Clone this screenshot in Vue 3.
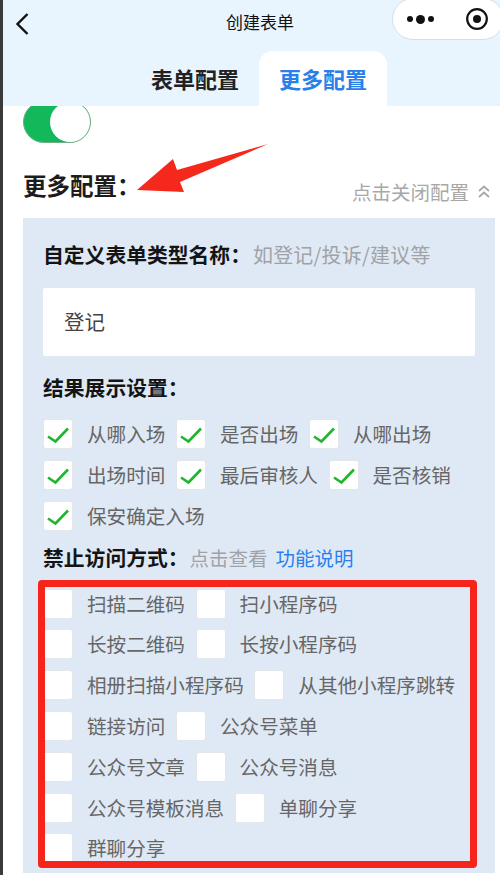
<script setup>
const resultOptions = ["从哪入场", "是否出场", "从哪出场", "出场时间", "最后审核人", "是否核销", "保安确定入场"];
const forbidOptions = [
  "扫描二维码", "扫小程序码", "长按二维码", "长按小程序码", "相册扫描小程序码", "从其他小程序跳转",
  "链接访问", "公众号菜单", "公众号文章", "公众号消息", "公众号模板消息", "单聊分享", "群聊分享",
];
</script>

<template>
  <div class="page">
    <header class="top">
      <div class="nav">
        <svg class="back" viewBox="0 0 14 24" width="14" height="24">
          <polyline points="12.5,2 2.5,12 12.5,22" fill="none" stroke="#111" stroke-width="2.4" />
        </svg>
        <div class="nav-title">创建表单</div>
        <div class="capsule">
          <span class="dots"><i></i><i class="big"></i><i></i></span>
          <svg viewBox="0 0 24 24" width="24" height="24">
            <circle cx="12" cy="12" r="9.8" fill="none" stroke="#111" stroke-width="2.2" />
            <circle cx="12" cy="12" r="4" fill="#111" />
          </svg>
        </div>
      </div>
      <div class="tabs">
        <div class="tab">表单配置</div>
        <div class="tab active">更多配置</div>
      </div>
    </header>

    <main class="body">
      <div class="switch-clip">
        <div class="switch"><span class="knob"></span></div>
      </div>

      <div class="title-row">
        <div class="title">更多配置：</div>
        <div class="collapse">
          点击关闭配置
          <svg viewBox="0 0 12 14" width="12" height="14">
            <polyline points="1,6 6,1.5 11,6" fill="none" stroke="#a8a8a8" stroke-width="1.7" />
            <polyline points="1,12 6,7.5 11,12" fill="none" stroke="#a8a8a8" stroke-width="1.7" />
          </svg>
        </div>
        <svg class="arrow" viewBox="0 0 131 48" width="131" height="48">
          <polygon points="0,46 36,15 40,26 131,0 43,38 47,48" fill="#f5281c" />
        </svg>
      </div>

      <section class="panel">
        <div class="label">
          自定义表单类型名称：<span class="hint type-hint">如登记/投诉/建议等</span>
        </div>
        <div class="input">登记</div>

        <div class="label result-label">结果展示设置：</div>
        <div class="check-list">
          <div v-for="item in resultOptions" :key="item" class="check-item">
            <span class="box">
              <svg viewBox="0 0 30 30" width="30" height="30">
                <polyline points="5,17.5 12.5,22.5 25,9.5" fill="none" stroke="#1fb52e" stroke-width="2.6" />
              </svg>
            </span>
            <span class="check-text">{{ item }}</span>
          </div>
        </div>

        <div class="label forbid-label">
          禁止访问方式：<span class="hint">点击查看</span><span class="link">功能说明</span>
        </div>
        <div class="check-list forbid-list">
          <div v-for="item in forbidOptions" :key="item" class="check-item">
            <span class="box"></span>
            <span class="check-text">{{ item }}</span>
          </div>
          <div class="red-frame"></div>
        </div>
      </section>
    </main>
  </div>
</template>

<style scoped>
.page {
  position: relative;
  width: 500px;
  height: 875px;
  box-sizing: border-box;
  overflow: hidden;
  border-left: 3px solid #3a3a3a;
  background: #fff;
  font-family: "Noto Sans CJK SC", "Noto Sans", sans-serif;
  color: #111;
}
.top {
  height: 106px;
  background: #e8f4fe;
}
.nav {
  display: flex;
  align-items: flex-start;
  height: 51px;
  padding-left: 12px;
}
.back {
  margin-top: 12px;
  flex: none;
}
.nav-title {
  width: 67px;
  margin-left: 197px;
  margin-top: 9px;
  font-size: 17px;
  line-height: 26px;
  white-space: nowrap;
}
.capsule {
  display: flex;
  align-items: center;
  justify-content: space-between;
  box-sizing: border-box;
  width: 112px;
  height: 42px;
  margin-top: -2px;
  margin-left: 99px;
  flex: none;
  padding: 0 14px 0 14px;
  background: #fff;
  border: 1px solid #d8dee4;
  border-radius: 21px;
}
.dots {
  display: flex;
  align-items: center;
  gap: 3px;
}
.dots i {
  display: block;
  width: 6px;
  height: 6px;
  border-radius: 50%;
  background: #111;
}
.dots i.big {
  width: 9px;
  height: 9px;
}
.tabs {
  display: flex;
  height: 55px;
  padding-left: 128px;
}
.tab {
  padding: 0 20px;
  font-size: 22px;
  font-weight: 700;
  line-height: 54px;
  color: #222;
}
.tab.active {
  background: #fff;
  border-radius: 14px 14px 0 0;
  color: #2a80ea;
}
.body {
  padding: 0 5px 0 20px;
}
.switch-clip {
  display: flex;
  align-items: flex-end;
  height: 37px;
  overflow: hidden;
}
.switch {
  position: relative;
  flex: none;
  box-sizing: border-box;
  width: 68px;
  height: 42px;
  background: #12b85a;
  border: 1px solid #6fae84;
  border-radius: 21px;
}
.knob {
  position: absolute;
  top: 0;
  right: 0;
  width: 40px;
  height: 40px;
  background: #fff;
  border-radius: 50%;
}
.title-row {
  position: relative;
  display: flex;
  justify-content: space-between;
  align-items: flex-start;
  height: 75px;
  padding-right: 5px;
}
.title {
  margin-top: 26px;
  font-size: 23.5px;
  font-weight: 700;
  line-height: 32px;
  color: #1c1c1c;
}
.collapse {
  display: flex;
  align-items: center;
  gap: 9px;
  margin-top: 34px;
  font-size: 19.5px;
  line-height: 30px;
  color: #a8a8a8;
}
.arrow {
  position: absolute;
  left: 114px;
  top: 1px;
}
.panel {
  box-sizing: border-box;
  height: 655px;
  padding: 21px 20px 9px 20px;
  background: #dfe9f5;
}
.label {
  height: 30px;
  font-size: 20.8px;
  font-weight: 700;
  line-height: 30px;
  color: #141414;
  white-space: nowrap;
}
.hint {
  margin-left: 1px;
  font-size: 19.5px;
  font-weight: 400;
  color: #a0a2a6;
}
.type-hint {
  margin-left: 2px;
  font-size: 20px;
  letter-spacing: 0.2px;
}
.link {
  margin-left: 8px;
  font-size: 19.5px;
  font-weight: 400;
  color: #2a80ea;
}
.input {
  box-sizing: border-box;
  height: 68px;
  margin-top: 19px;
  padding-left: 21px;
  background: #fff;
  border-radius: 2px;
  font-size: 20.5px;
  line-height: 67px;
  color: #444;
}
.result-label {
  margin-top: 16px;
}
.forbid-label {
  margin-top: 11px;
}
.check-list {
  display: flex;
  flex-wrap: wrap;
  gap: 10.8px 10.6px;
  width: 423px;
  margin-top: 17px;
}
.forbid-list {
  position: relative;
}
.check-item {
  display: flex;
  align-items: center;
  height: 30px;
}
.box {
  display: block;
  box-sizing: border-box;
  flex: none;
  width: 30px;
  height: 30px;
  background: #fff;
  border: 1px solid #e3e7ec;
  border-radius: 3px;
}
.box svg {
  display: block;
  margin: -1px;
}
.check-text {
  margin-left: 14px;
  font-size: 19.6px;
  line-height: 28px;
  color: #666;
  white-space: nowrap;
}
.red-frame {
  position: absolute;
  top: -9px;
  left: -5px;
  right: -11px;
  bottom: -5px;
  box-sizing: border-box;
  border: 7px solid #f5251b;
  border-radius: 4px;
}
</style>
